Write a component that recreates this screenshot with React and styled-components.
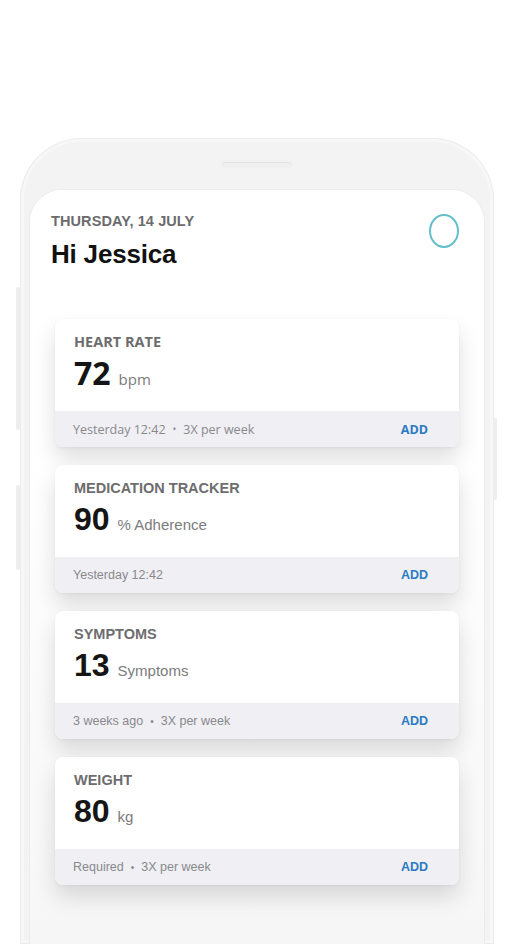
import React from 'react'
import styled, { createGlobalStyle } from 'styled-components'

const GlobalStyle = createGlobalStyle`
  html, body {
    margin: 0;
    padding: 0;
    background: #ffffff;
    height: 944px;
    overflow: hidden;
  }
  body {
    font-family: "Liberation Sans", Arial, sans-serif;
  }
`

const cards = [
  { title: 'HEART RATE', value: '72', unit: 'bpm', meta: ['Yesterday 12:42', '3X per week'], font: '"Open Sans", sans-serif' },
  { title: 'MEDICATION TRACKER', value: '90', unit: '% Adherence', meta: ['Yesterday 12:42'] },
  { title: 'SYMPTOMS', value: '13', unit: 'Symptoms', meta: ['3 weeks ago', '3X per week'] },
  { title: 'WEIGHT', value: '80', unit: 'kg', meta: ['Required', '3X per week'] },
]

function Card({ title, value, unit, meta, font }) {
  return (
    <CardBox $font={font}>
      <CardBody>
        <CardTitle>{title}</CardTitle>
        <ValueRow>
          <Value>{value}</Value>
          <Unit>{unit}</Unit>
        </ValueRow>
      </CardBody>
      <CardFooter>
        <Meta>
          {meta.map((m, i) => (
            <React.Fragment key={m}>
              {i > 0 && <Dot>•</Dot>}
              <span>{m}</span>
            </React.Fragment>
          ))}
        </Meta>
        <AddButton>ADD</AddButton>
      </CardFooter>
    </CardBox>
  )
}

export default function App() {
  return (
    <>
      <GlobalStyle />
      <Page>
        <Phone>
          <SideButton $side="left" $top={149} $h={143} />
          <SideButton $side="left" $top={347} $h={85} />
          <SideButton $side="right" $top={280} $h={82} />
          <Speaker />
          <Screen>
            <Header>
              <div>
                <DateLine>THURSDAY, 14 JULY</DateLine>
                <Greeting>Hi Jessica</Greeting>
              </div>
              <Avatar />
            </Header>
            <CardList>
              {cards.map((c) => (
                <Card key={c.title} {...c} />
              ))}
            </CardList>
          </Screen>
        </Phone>
      </Page>
    </>
  )
}

const Page = styled.div`
  padding-top: 138px;
  height: 944px;
  box-sizing: border-box;
  overflow: hidden;
`

const Phone = styled.div`
  position: relative;
  margin: 0 0 0 20px;
  width: 474px;
  height: 806px;
  box-sizing: border-box;
  background: #f3f3f4;
  border-radius: 62px 62px 0 0;
  box-shadow: inset 0 0 0 1px #ececee, inset 0 0 0 4px #f7f7f8;
  padding-top: 24px;
`

const SideButton = styled.div`
  position: absolute;
  top: ${(p) => p.$top}px;
  ${(p) => (p.$side === 'left' ? 'left: -4px;' : 'right: -3px;')}
  width: 4px;
  height: ${(p) => p.$h}px;
  background: #eeeeef;
  border-radius: 2px;
`

const Speaker = styled.div`
  width: 70px;
  height: 6px;
  margin: 0 auto;
  border-radius: 3px;
  background: #f0f0f1;
  box-shadow: inset 0 1px 1px #e2e2e4;
`

const Screen = styled.div`
  margin: 22px 10px 0;
  height: 754px;
  box-sizing: border-box;
  border-radius: 32px 32px 0 0;
  background: linear-gradient(#ffffff 0%, #ffffff 35%, #f6f6f6 100%);
  box-shadow: 0 0 0 1px #ececee;
  padding: 23px 25px 0 21px;
`

const Header = styled.div`
  display: flex;
  justify-content: space-between;
  align-items: flex-start;
`

const DateLine = styled.div`
  font-size: 14.5px;
  font-weight: 700;
  color: #6b6b6d;
  letter-spacing: 0.1px;
  line-height: 16px;
`

const Greeting = styled.h1`
  margin: 10px 0 0;
  font-size: 26px;
  font-weight: 700;
  color: #111111;
  line-height: 30px;
  letter-spacing: -0.2px;
`

const Avatar = styled.div`
  width: 26px;
  height: 30px;
  margin-top: 1px;
  border: 2px solid #62bfcb;
  border-radius: 50%;
`

const CardList = styled.div`
  display: flex;
  flex-direction: column;
  gap: 18px;
  margin: 50px 0 0 4px;
  width: 404px;
`

const CardBox = styled.div`
  border-radius: 8px;
  overflow: hidden;
  background: #ffffff;
  font-family: ${(p) => p.$font || '"Liberation Sans", Arial, sans-serif'};
  box-shadow: 0 12px 22px rgba(0, 0, 0, 0.13), 0 1px 3px rgba(0, 0, 0, 0.05);
`

const CardBody = styled.div`
  height: 92px;
  box-sizing: border-box;
  padding: 13px 19px 0;
`

const CardTitle = styled.div`
  font-size: 14.5px;
  font-weight: 700;
  color: #6d6d6f;
  line-height: 20px;
`

const ValueRow = styled.div`
  display: flex;
  align-items: baseline;
  gap: 8px;
  margin-top: 3px;
`

const Value = styled.span`
  font-size: 32px;
  font-weight: 700;
  color: #151515;
  line-height: 36px;
`

const Unit = styled.span`
  font-size: 15px;
  color: #7b7b7d;
`

const CardFooter = styled.div`
  height: 36px;
  background: #efeff4;
  display: flex;
  align-items: center;
  justify-content: space-between;
  padding: 0 31px 0 18px;
`

const Meta = styled.div`
  display: flex;
  align-items: center;
  font-size: 12.5px;
  color: #89898c;
`

const Dot = styled.span`
  margin: 0 7px;
  font-size: 10px;
`

const AddButton = styled.button`
  border: none;
  background: none;
  padding: 0;
  font-family: inherit;
  font-size: 12.5px;
  font-weight: 700;
  color: #2c7bc2;
  cursor: pointer;
`
